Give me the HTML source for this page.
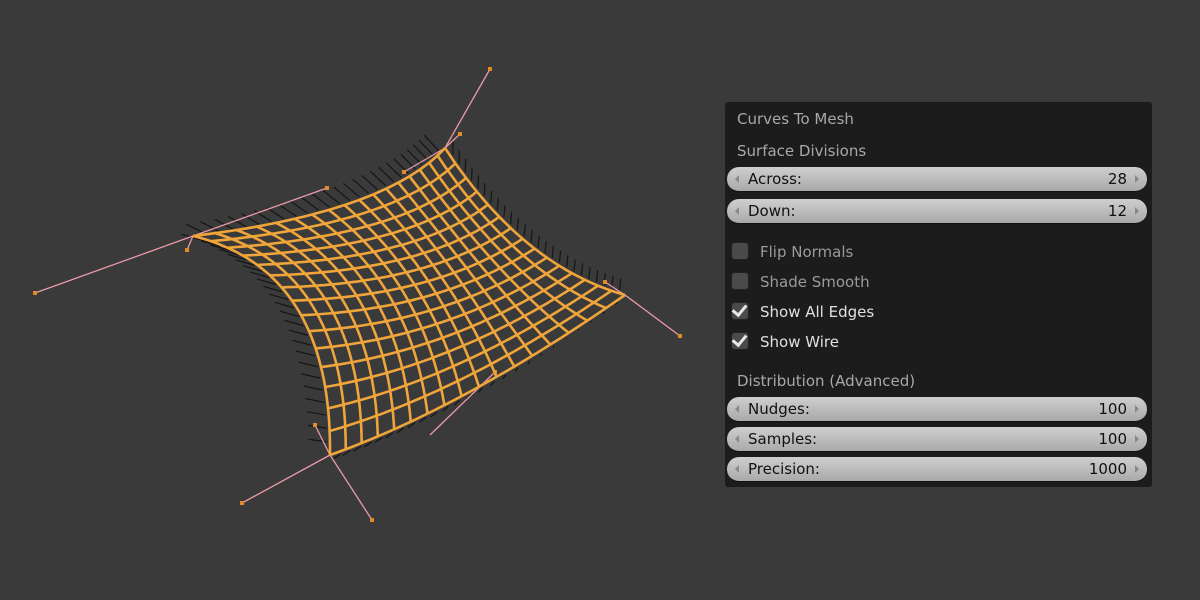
<!DOCTYPE html>
<html><head><meta charset="utf-8"><style>
body{margin:0;width:1200px;height:600px;background:#3a3a3a;overflow:hidden;font-family:"DejaVu Sans","Liberation Sans",sans-serif;position:relative}
#panel{position:absolute;left:725px;top:102px;width:427px;height:385px;background:#1c1c1c;border-radius:3px}
.h{position:absolute;left:12px;color:#a8a8a8;font-size:15px}
.f{position:absolute;left:2px;width:420px;height:24px;border-radius:12px;background:linear-gradient(#cfcfcf,#a9a9a9);border-bottom:1px solid #111;color:#111;font-size:15px;line-height:24px}
.f .l{position:absolute;left:21px}.f .v{position:absolute;right:20px}
.f:before{content:"";position:absolute;left:8px;top:8px;border:4px solid transparent;border-right:4px solid #888;border-left:0}
.f:after{content:"";position:absolute;right:8px;top:8px;border:4px solid transparent;border-left:4px solid #888;border-right:0}
.c{position:absolute;left:6px;width:18px;height:18px;border-radius:4px;background:#4a4a4a;box-shadow:inset 0 0 0 1px #222}
.ct{position:absolute;left:35px;font-size:15px}
.ck:after{content:"";position:absolute;left:4px;top:0px;width:6px;height:11px;border:solid #e8e8e8;border-width:0 3px 3px 0;transform:rotate(40deg)}
</style></head><body>
<svg id="s" width="1200" height="600" style="position:absolute;left:0;top:0"></svg>
<div id="panel">
<div class="h" style="top:8px">Curves To Mesh</div>
<div class="h" style="top:40px">Surface Divisions</div>
<div class="f" style="top:65px"><span class="l">Across:</span><span class="v">28</span></div>
<div class="f" style="top:97px"><span class="l">Down:</span><span class="v">12</span></div>
<div class="c" style="top:140px"></div><div class="ct" style="top:141px;color:#9a9a9a">Flip Normals</div>
<div class="c" style="top:170px"></div><div class="ct" style="top:171px;color:#9a9a9a">Shade Smooth</div>
<div class="c ck" style="top:200px"></div><div class="ct" style="top:201px;color:#e0e0e0">Show All Edges</div>
<div class="c ck" style="top:230px"></div><div class="ct" style="top:231px;color:#e0e0e0">Show Wire</div>
<div class="h" style="top:270px">Distribution (Advanced)</div>
<div class="f" style="top:295px"><span class="l">Nudges:</span><span class="v">100</span></div>
<div class="f" style="top:325px"><span class="l">Samples:</span><span class="v">100</span></div>
<div class="f" style="top:355px"><span class="l">Precision:</span><span class="v">1000</span></div>
</div>
<script>
var A=[193,236],B=[445,148],C=[625,295],D=[330,455];
var cAB=[385,213],cBC=[522,266],cDC=[463,408],cAD=[332,270];
function q(p,c,r,t){return [(1-t)*(1-t)*p[0]+2*(1-t)*t*c[0]+t*t*r[0],(1-t)*(1-t)*p[1]+2*(1-t)*t*c[1]+t*t*r[1]];}
function P(u,v){var top=q(A,cAB,B,u),bot=q(D,cDC,C,u),l=q(A,cAD,D,v),r=q(B,cBC,C,v);var o=[];
for(var i=0;i<2;i++){o[i]=(1-v)*top[i]+v*bot[i]+(1-u)*l[i]+u*r[i]-((1-u)*(1-v)*A[i]+u*(1-v)*B[i]+(1-u)*v*D[i]+u*v*C[i]);}return o;}
var s='';
function ln(a,b,c,w){s+='<line x1="'+a[0]+'" y1="'+a[1]+'" x2="'+b[0]+'" y2="'+b[1]+'" stroke="'+c+'" stroke-width="'+w+'"/>';}
var N=26;for(var k=1;k<N;k++){var t=k/N;
 [[P(t,0),P(t,0.03)],[P(t,1),P(t,0.97)],[P(0,t),P(0.03,t)],[P(1,t),P(0.97,t)]].forEach(function(pr){
  var dx=pr[0][0]-pr[1][0],dy=pr[0][1]-pr[1][1],L=Math.hypot(dx,dy)||1;
  var a=[pr[0][0]+dx/L*3,pr[0][1]+dy/L*3];
  var e=[pr[0][0]+dx/L*14-8,pr[0][1]+dy/L*14-6];ln(a,e,'#151515',1.2);});}
var H=[[A,[35,293]],[A,[327,188]],[A,[187,250]],[B,[490,69]],[B,[404,172]],[B,[460,134]],[C,[680,336]],[C,[605,282]],[D,[242,503]],[D,[372,520]],[D,[315,425]],[[430,435],[495,372]]];
H.forEach(function(h){ln(h[0],h[1],'#e99aa8',1.3);s+='<rect x="'+(h[1][0]-2)+'" y="'+(h[1][1]-2)+'" width="4" height="4" fill="#e08a2a"/>';});
var NU=17,NV=15,M=40;
for(var i=0;i<=NU;i++){var d='M';for(var j=0;j<=M;j++){var p=P(i/NU,j/M);d+=p[0].toFixed(1)+','+p[1].toFixed(1)+' ';}s+='<path d="'+d+'" fill="none" stroke="#f0a53a" stroke-width="2.6"/>';}
for(var j=0;j<=NV;j++){var d='M';for(var i=0;i<=M;i++){var p=P(i/M,j/NV);d+=p[0].toFixed(1)+','+p[1].toFixed(1)+' ';}s+='<path d="'+d+'" fill="none" stroke="#f0a53a" stroke-width="2.6"/>';}
document.getElementById('s').innerHTML=s;
</script>
</body></html>
